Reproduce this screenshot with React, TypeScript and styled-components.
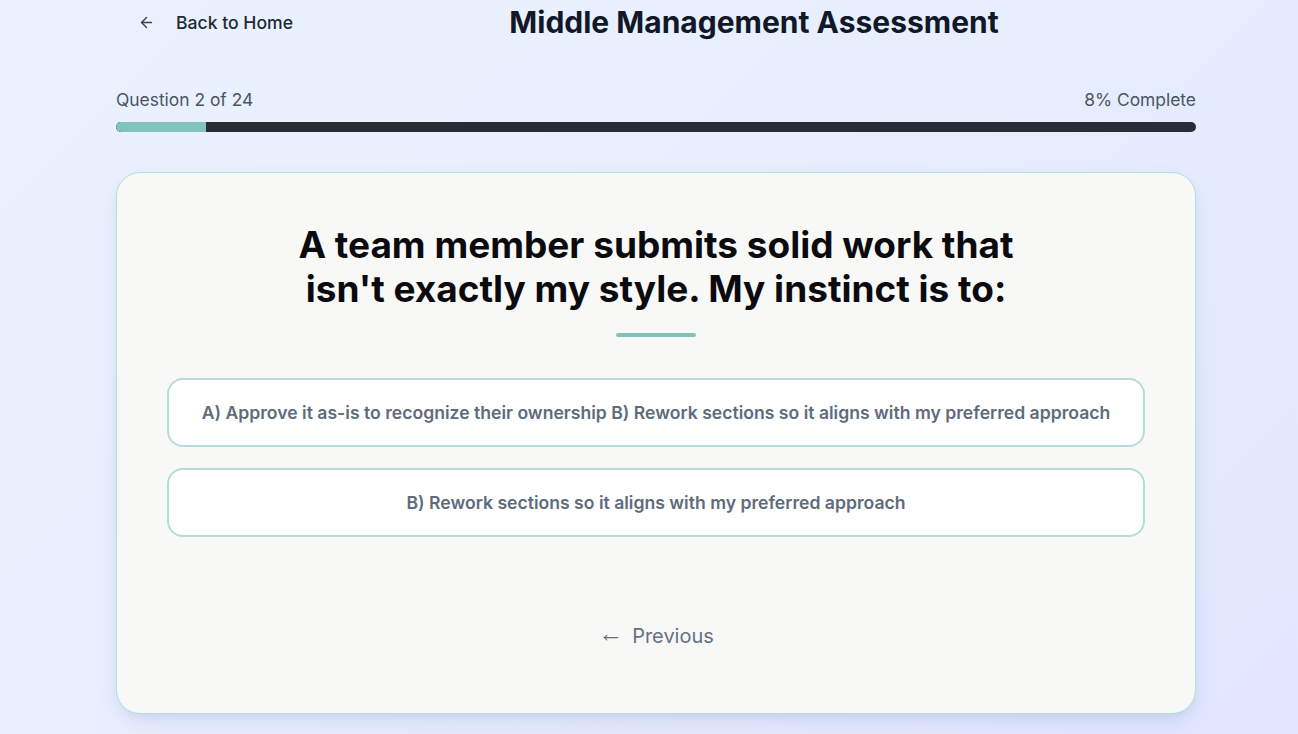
import React from "react";
import styled, { createGlobalStyle } from "styled-components";
import { ArrowLeft } from "lucide-react";

const Global = createGlobalStyle`
  html, body { margin: 0; padding: 0; }
  body {
    font-family: Inter, "Noto Sans", sans-serif;
    background: linear-gradient(135deg, #ebf2fe 0%, #e7eefe 50%, #e0e6fe 100%);
    min-height: 100vh;
  }
  * { box-sizing: border-box; }
`;

const Page = styled.div`
  width: 1080px;
  margin-left: calc((100% - 1080px) / 2 + 7px);
`;

const Header = styled.header`
  display: flex;
  align-items: center;
  justify-content: space-between;
  height: 44px;
`;

const BackButton = styled.button`
  display: flex;
  align-items: center;
  gap: 21px;
  width: 196px;
  padding: 0 0 0 22px;
  background: none;
  border: none;
  font-family: inherit;
  font-size: 17.6px;
  font-weight: 500;
  color: #1f2937;
  cursor: pointer;
`;

const Title = styled.h1`
  margin: 0;
  font-size: 30px;
  font-weight: 700;
  color: #111827;
`;

const Spacer = styled.div`
  width: 0;
`;

const Progress = styled.section`
  margin-top: 43px;
`;

const ProgressLabels = styled.div`
  display: flex;
  justify-content: space-between;
  font-size: 17.4px;
  color: #4b5563;
  line-height: 26px;
`;

const Track = styled.div`
  margin-top: 9px;
  height: 10px;
  border-radius: 5px;
  background: #282c36;
  overflow: hidden;
`;

const Fill = styled.div`
  height: 100%;
  background: #81c4bb;
  border-radius: 5px 0 0 5px;
`;

const Card = styled.main`
  margin-top: 40px;
  background: #f8f8f6;
  border: 1px solid #b3e0dc;
  border-radius: 24px;
  box-shadow: 0 10px 25px -5px rgba(100, 110, 170, 0.18), 0 4px 10px -4px rgba(100, 110, 170, 0.12);
  padding: 50px 50px 64px;
  display: flex;
  flex-direction: column;
  align-items: center;
`;

const Question = styled.h2`
  margin: 0;
  max-width: 760px;
  text-align: center;
  font-size: 37px;
  font-weight: 700;
  line-height: 44px;
  color: #0b0b0f;
`;

const Divider = styled.div`
  width: 80px;
  height: 4px;
  border-radius: 2px;
  background: #81c4bb;
  margin-top: 22px;
`;

const Options = styled.div`
  width: 100%;
  margin-top: 41px;
  display: flex;
  flex-direction: column;
  gap: 21px;
`;

const Option = styled.button`
  width: 100%;
  height: 69px;
  background: #ffffff;
  border: 2px solid #b5ddd8;
  border-radius: 16px;
  font-family: inherit;
  font-size: 17.6px;
  font-weight: 600;
  color: #5f6b7b;
  cursor: pointer;
`;

const PrevButton = styled.button`
  margin-top: 86px;
  background: none;
  border: none;
  font-family: inherit;
  font-size: 20px;
  line-height: 24px;
  color: #667085;
  cursor: pointer;
  display: flex;
  align-items: center;
  gap: 9px;
`;

const PrevArrow = styled.span`
  font-family: "Liberation Sans", Arial, sans-serif;
  font-size: 25px;
  line-height: 24px;
  position: relative;
  top: -3px;
`;

const options = [
  "A) Approve it as-is to recognize their ownership B) Rework sections so it aligns with my preferred approach",
  "B) Rework sections so it aligns with my preferred approach",
];

export default function App() {
  const current = 2;
  const total = 24;
  const pct = Math.round((current / total) * 100);
  return (
    <>
      <Global />
      <Page>
        <Header>
          <BackButton>
            <ArrowLeft size={17} strokeWidth={2} color="#374151" />
            Back to Home
          </BackButton>
          <Title>Middle Management Assessment</Title>
          <Spacer />
        </Header>
        <Progress>
          <ProgressLabels>
            <span>Question {current} of {total}</span>
            <span>{pct}% Complete</span>
          </ProgressLabels>
          <Track>
            <Fill style={{ width: `${(current / total) * 100}%` }} />
          </Track>
        </Progress>
        <Card>
          <Question>A team member submits solid work that isn't exactly my style. My instinct is to:</Question>
          <Divider />
          <Options>
            {options.map((o) => (
              <Option key={o}>{o}</Option>
            ))}
          </Options>
          <PrevButton>
            <PrevArrow>←</PrevArrow>
            <span>Previous</span>
          </PrevButton>
        </Card>
      </Page>
    </>
  );
}
